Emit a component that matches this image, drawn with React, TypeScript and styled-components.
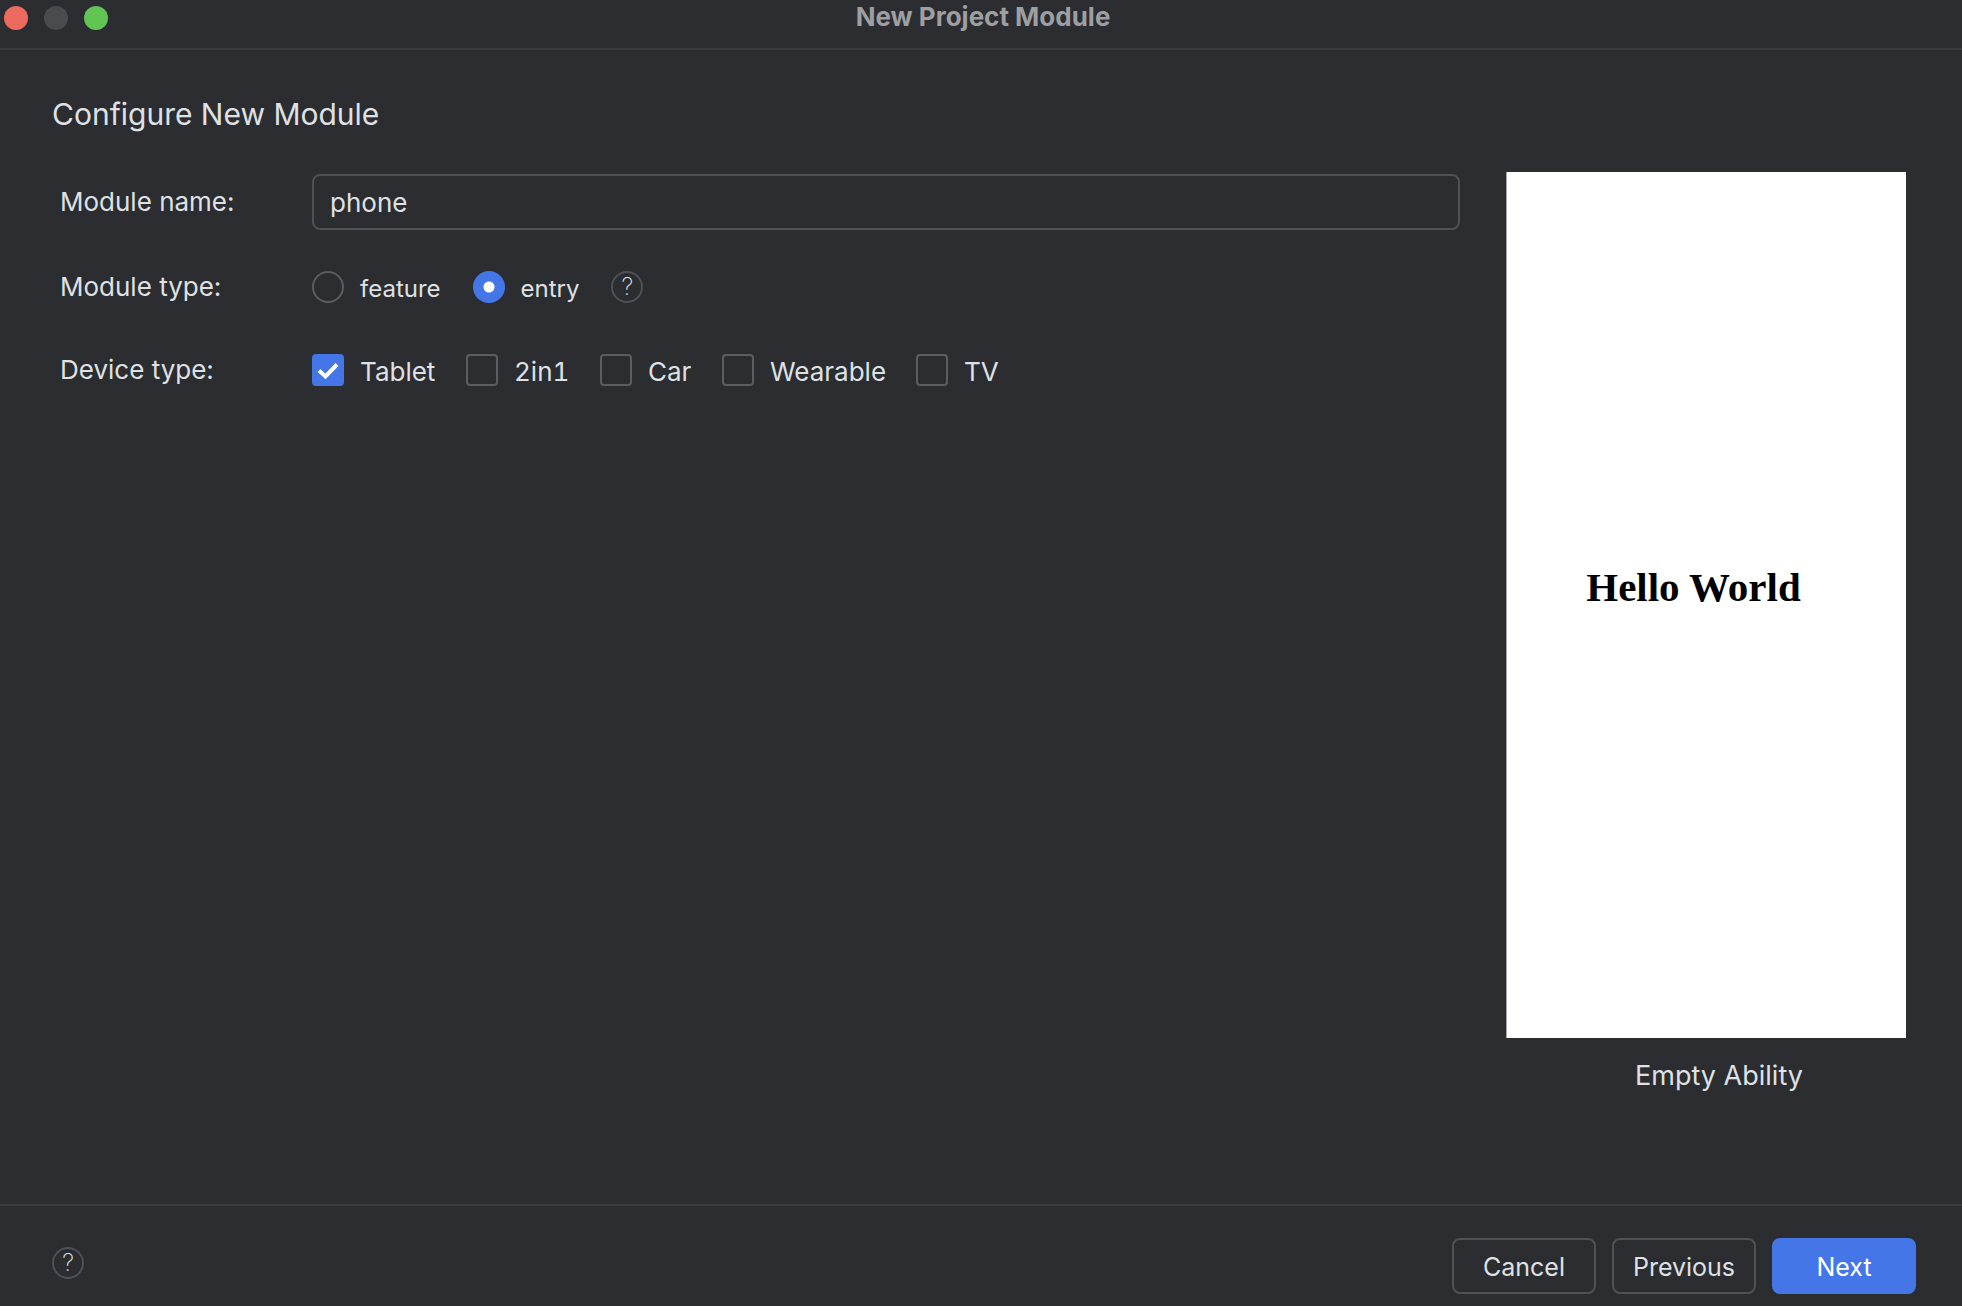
import React, { useState } from "react";
import styled, { createGlobalStyle } from "styled-components";

const GlobalStyle = createGlobalStyle`
  * { box-sizing: border-box; }
  body {
    margin: 0;
    background: #2b2d30;
    color: #dfe1e5;
    font: 26px/32px Inter, "Noto Sans", sans-serif;
  }
  button, input { font: inherit; color: inherit; }
`;

const Dialog = styled.div`
  min-height: 100vh;
  display: flex;
  flex-direction: column;
`;

const TitleBar = styled.header`
  display: flex;
  height: 50px;
  border-bottom: 2px solid #393b40;
`;

const Lights = styled.div`
  display: flex;
  gap: 16px;
  padding: 6px 4px;
  width: 112px;
`;

const Light = styled.button<{ $color: string }>`
  width: 24px;
  height: 24px;
  padding: 0;
  border: 0;
  border-radius: 50%;
  background: ${(p) => p.$color};
`;

const Title = styled.h1`
  flex: 1;
  margin: 0;
  padding-right: 108px;
  text-align: center;
  font-size: 26px;
  line-height: 34px;
  font-weight: 700;
  color: #9d9fa2;
`;

const Main = styled.main`
  flex: 1;
  display: flex;
  gap: 46px;
  padding: 42px 56px 0 52px;
`;

const FormColumn = styled.form`
  flex: 1;
  min-width: 0;
`;

const Heading = styled.h2`
  margin: 0;
  font-size: 30px;
  line-height: 44px;
  font-weight: 400;
`;

const Rows = styled.div`
  display: flex;
  flex-direction: column;
  gap: 31px;
  margin-top: 38px;
  padding-left: 8px;
`;

const Row = styled.div`
  display: grid;
  grid-template-columns: 252px 1fr;
  align-items: center;
  min-height: 52px;
`;

const RowLabel = styled.label`
  display: block;
`;

const TextInput = styled.input`
  width: 100%;
  height: 56px;
  padding: 0 16px;
  border: 2px solid #4e5157;
  border-radius: 8px;
  background: transparent;
  outline: 0;
`;

const TypeOptions = styled.div`
  display: flex;
  align-items: center;
  gap: 32px;
  font-size: 24px;
`;

const DeviceOptions = styled.div`
  display: grid;
  grid-template-columns: 154px 134px 122px 194px auto;
  justify-content: start;
  align-items: center;
  font-variant-numeric: tabular-nums;
`;

const Option = styled.label`
  display: flex;
  align-items: center;
  gap: 16px;
`;

const OptionText = styled.span`
  padding-top: 4px;
`;

const Radio = styled.input`
  appearance: none;
  width: 32px;
  height: 32px;
  margin: 0;
  border: 2px solid #5a5d63;
  border-radius: 50%;
  &:checked {
    border: 0;
    background: radial-gradient(circle, #fff 5px, #4576e8 6px);
  }
`;

const BoxStack = styled.span`
  display: grid;
  > * { grid-area: 1 / 1; }
`;

const Box = styled.input`
  appearance: none;
  width: 32px;
  height: 32px;
  margin: 0;
  border: 2px solid #5a5d63;
  border-radius: 4px;
  &:checked {
    border: 0;
    background: #4576e8;
  }
`;

const Tick = styled.svg`
  pointer-events: none;
`;

const HelpButton = styled.button`
  display: flex;
  align-items: center;
  justify-content: center;
  width: 32px;
  height: 32px;
  padding: 0;
  border: 2px solid #4e5157;
  border-radius: 50%;
  background: transparent;
  font-size: 24px;
  font-weight: 200;
  line-height: 28px;
`;

const Preview = styled.figure`
  flex: 0 0 400px;
  display: flex;
  flex-direction: column;
  margin: 80px 0 108px;
`;

const Screen = styled.div`
  flex: 1;
  display: flex;
  align-items: center;
  justify-content: center;
  padding: 0 26px 36px 0;
  border-left: 1px solid #a4a5a6;
  background: #fff;
  color: #000;
  font: bold 41px/48px "Liberation Serif", serif;
`;

const Caption = styled.figcaption`
  padding: 18px 0 0 26px;
  text-align: center;
  font-size: 27px;
  line-height: 40px;
`;

const Footer = styled.footer`
  display: flex;
  align-items: flex-start;
  justify-content: space-between;
  height: 102px;
  padding: 32px 46px 0 52px;
  border-top: 2px solid #393b40;
`;

const FooterHelp = styled.div`
  padding-top: 9px;
`;

const Actions = styled.div`
  display: flex;
  gap: 16px;
`;

const ActionButton = styled.button<{ $primary?: boolean }>`
  width: 144px;
  height: 56px;
  padding: 2px 0 0;
  border: 2px solid ${(p) => (p.$primary ? "#4576e8" : "#4e5157")};
  border-radius: 8px;
  background: ${(p) => (p.$primary ? "#4576e8" : "transparent")};
  color: ${(p) => (p.$primary ? "#fff" : "#dfe1e5")};
  font-size: 25px;
`;

const DEVICES = ["Tablet", "2in1", "Car", "Wearable", "TV"];
const MODULE_TYPES = ["feature", "entry"];

export default function App() {
  const [name, setName] = useState("phone");
  const [moduleType, setModuleType] = useState("entry");
  const [devices, setDevices] = useState<string[]>(["Tablet"]);

  const toggle = (d: string) =>
    setDevices((list) => (list.includes(d) ? list.filter((x) => x !== d) : [...list, d]));

  return (
    <Dialog>
      <GlobalStyle />
      <TitleBar>
        <Lights>
          <Light $color="#ed6a5e" aria-label="Close" />
          <Light $color="#4a4b4d" aria-label="Minimize" />
          <Light $color="#61c554" aria-label="Zoom" />
        </Lights>
        <Title>New Project Module</Title>
      </TitleBar>
      <Main>
        <FormColumn onSubmit={(e) => e.preventDefault()}>
          <Heading>Configure New Module</Heading>
          <Rows>
            <Row>
              <RowLabel htmlFor="module-name">Module name:</RowLabel>
              <TextInput id="module-name" value={name} onChange={(e) => setName(e.target.value)} />
            </Row>
            <Row role="radiogroup" aria-labelledby="module-type">
              <RowLabel as="span" id="module-type">Module type:</RowLabel>
              <TypeOptions>
                {MODULE_TYPES.map((t) => (
                  <Option key={t}>
                    <Radio
                      type="radio"
                      name="module-type"
                      checked={moduleType === t}
                      onChange={() => setModuleType(t)}
                    />
                    <OptionText>{t}</OptionText>
                  </Option>
                ))}
                <HelpButton type="button">?</HelpButton>
              </TypeOptions>
            </Row>
            <Row role="group" aria-labelledby="device-type">
              <RowLabel as="span" id="device-type">Device type:</RowLabel>
              <DeviceOptions>
                {DEVICES.map((d) => (
                  <Option key={d}>
                    <BoxStack>
                      <Box type="checkbox" checked={devices.includes(d)} onChange={() => toggle(d)} />
                      {devices.includes(d) && (
                        <Tick width="32" height="32" viewBox="0 0 32 32" fill="none">
                          <path d="M7 16.5L13.5 22.5L25 10.5" stroke="#fff" strokeWidth="4" />
                        </Tick>
                      )}
                    </BoxStack>
                    <OptionText>{d}</OptionText>
                  </Option>
                ))}
              </DeviceOptions>
            </Row>
          </Rows>
        </FormColumn>
        <Preview>
          <Screen>Hello World</Screen>
          <Caption>Empty Ability</Caption>
        </Preview>
      </Main>
      <Footer>
        <FooterHelp>
          <HelpButton type="button">?</HelpButton>
        </FooterHelp>
        <Actions>
          <ActionButton type="button">Cancel</ActionButton>
          <ActionButton type="button">Previous</ActionButton>
          <ActionButton type="button" $primary>Next</ActionButton>
        </Actions>
      </Footer>
    </Dialog>
  );
}
